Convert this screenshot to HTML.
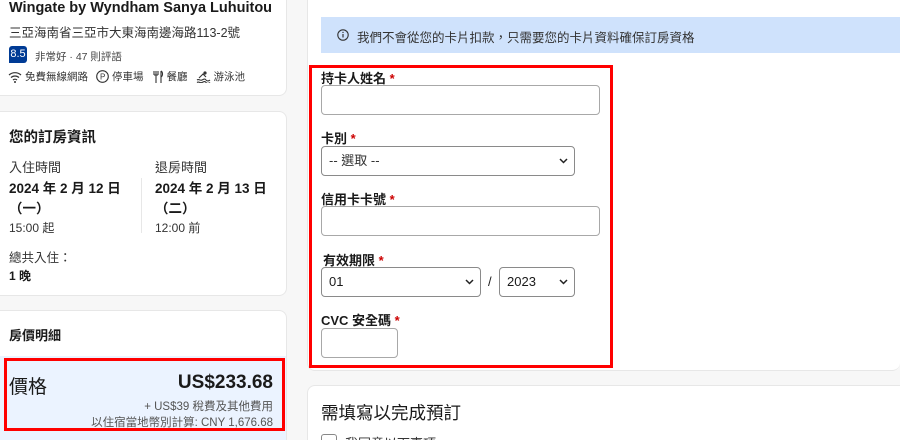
<!DOCTYPE html>
<html style="width:900px;height:440px;overflow:hidden"><head><meta charset="utf-8"><style>
*{box-sizing:border-box;margin:0;padding:0}
body{width:900px;height:440px;overflow:hidden;background:#f7f7f7;font-family:"Liberation Sans","Noto Sans CJK TC",sans-serif;color:#1a1a1a;position:relative}
.a{position:absolute;white-space:nowrap}
.card{position:absolute;background:#fff;border:1px solid #e7e7e7;border-radius:8px}
.b{font-weight:bold}
.in{position:absolute;border:1px solid #a8a8a8;border-radius:4px;background:#fff}
.sel{position:absolute;border:1px solid #8a8a8a;border-radius:4px;background:#fff;font-size:13px;padding:0 7px;line-height:28px}
.sel svg{position:absolute;right:6px;top:11px}
.lab{position:absolute;font-size:13px;font-weight:bold;white-space:nowrap}
.lab i{color:#c00;font-style:normal}
</style></head><body>
<div class="card" style="left:-10px;top:-10px;width:297px;height:106px"></div>
<div class="a b" style="left:9px;top:0px;font-size:14.5px">Wingate by Wyndham Sanya Luhuitou</div>
<div class="a" style="left:9px;top:22px;font-size:12.5px;color:#333">三亞海南省三亞市大東海南邊海路113-2號</div>
<div class="a" style="left:9px;top:46px;width:18px;height:17px;background:#003b95;color:#fff;font-size:11px;text-align:center;line-height:17px;border-radius:3px 3px 3px 0">8.5</div>
<div class="a" style="left:35px;top:49px;font-size:10.5px;color:#444">非常好 · 47 則評語</div>
<div class="a" style="left:8px;top:69px;font-size:10.5px;color:#333;display:flex;align-items:center;gap:3px">
<svg width="14" height="12" viewBox="0 0 14 12"><path d="M1 4a9 9 0 0 1 12 0M3 6.5a6 6 0 0 1 8 0M5 9a3 3 0 0 1 4 0" stroke="#333" fill="none" stroke-width="1.2"/><circle cx="7" cy="11" r="1" fill="#333"/></svg>免費無線網路
<svg style="margin-left:5px" width="13" height="13" viewBox="0 0 13 13"><circle cx="6.5" cy="6.5" r="5.8" stroke="#333" fill="none" stroke-width="1.1"/><text x="4" y="9.5" font-size="8" font-family="Liberation Sans" fill="#333">P</text></svg>停車場
<svg style="margin-left:5px" width="12" height="13" viewBox="0 0 12 13"><path d="M2 1v4M4 1v4M6 1v4M2 5h4M4 5v8M9 1v12M9 1c2 1 2 5 0 6" stroke="#333" fill="none" stroke-width="1.1"/></svg>餐廳
<svg style="margin-left:5px" width="15" height="13" viewBox="0 0 15 13"><circle cx="9" cy="3" r="1.6" fill="#333"/><path d="M3 8l4-4 3 3M1 10c2-1.5 3 1 5 0s3-1.5 4 0 3 1 4 0M1 12.5c2-1.5 3 1 5 0s3-1.5 4 0 3 1 4 0" stroke="#333" fill="none" stroke-width="1.1"/></svg>游泳池</div>

<div class="card" style="left:-10px;top:111px;width:297px;height:185px"></div>
<div class="a b" style="left:9px;top:126px;font-size:14.5px">您的訂房資訊</div>
<div class="a" style="left:9px;top:157px;font-size:13px;color:#333">入住時間</div>
<div class="a" style="left:155px;top:157px;font-size:13px;color:#333">退房時間</div>
<div class="a b" style="left:9px;top:179px;font-size:13.5px;line-height:20px">2024 年 2 月 12 日<br>（一）</div>
<div class="a b" style="left:155px;top:179px;font-size:13.5px;line-height:20px">2024 年 2 月 13 日<br>（二）</div>
<div class="a" style="left:141px;top:178px;width:1px;height:55px;background:#e7e7e7"></div>
<div class="a" style="left:9px;top:219px;font-size:12px;color:#333">15:00 起</div>
<div class="a" style="left:155px;top:219px;font-size:12px;color:#333">12:00 前</div>
<div class="a" style="left:9px;top:247px;font-size:12.5px;color:#333">總共入住：</div>
<div class="a b" style="left:9px;top:267px;font-size:12px">1 晚</div>

<div class="card" style="left:-10px;top:310px;width:297px;height:130px;border-bottom:none;border-radius:8px 8px 0 0"></div>
<div class="a b" style="left:9px;top:325px;font-size:13px">房價明細</div>
<div class="a" style="left:0;top:356px;width:286px;height:84px;background:#ebf3ff"></div>
<div class="a" style="left:4px;top:358px;width:281px;height:73px;border:3px solid #f00"></div>
<div class="a" style="left:9px;top:372px;font-size:19px">價格</div>
<div class="a b" style="right:627px;top:372px;font-size:19px">US$233.68</div>
<div class="a" style="right:627px;top:398px;font-size:11.5px;color:#555">+ US$39 稅費及其他費用</div>
<div class="a" style="right:627px;top:414px;font-size:11.5px;color:#555">以住宿當地幣別計算: CNY 1,676.68</div>

<div class="card" style="left:307px;top:-10px;width:593px;height:381px;border-right:none"></div>
<div class="a" style="left:321px;top:17px;width:579px;height:36px;background:#cfe2fc"></div>
<svg class="a" style="left:337px;top:29px" width="12" height="12" viewBox="0 0 12 12"><circle cx="6" cy="6" r="5.2" stroke="#333" fill="none" stroke-width="1.1"/><path d="M6 5v3.5" stroke="#333" stroke-width="1.2"/><circle cx="6" cy="3.4" r=".7" fill="#333"/></svg>
<div class="a" style="left:357px;top:27px;font-size:12.5px;color:#333">我們不會從您的卡片扣款，只需要您的卡片資料確保訂房資格</div>
<div class="a" style="left:309px;top:65px;width:304px;height:303px;border:3px solid #f00"></div>
<div class="lab" style="left:321px;top:68px">持卡人姓名 <i>*</i></div>
<div class="in" style="left:321px;top:85px;width:279px;height:30px"></div>
<div class="lab" style="left:321px;top:128px">卡別 <i>*</i></div>
<div class="sel" style="left:321px;top:146px;width:254px;height:30px;color:#333">-- 選取 --<svg width="9" height="6" viewBox="0 0 9 6"><path d="M1 1l3.5 3.5L8 1" stroke="#222" fill="none" stroke-width="1.5"/></svg></div>
<div class="lab" style="left:321px;top:189px">信用卡卡號 <i>*</i></div>
<div class="in" style="left:321px;top:206px;width:279px;height:30px"></div>
<div class="lab" style="left:323px;top:250px">有效期限 <i>*</i></div>
<div class="sel" style="left:321px;top:267px;width:160px;height:30px">01<svg width="9" height="6" viewBox="0 0 9 6"><path d="M1 1l3.5 3.5L8 1" stroke="#222" fill="none" stroke-width="1.5"/></svg></div>
<div class="a" style="left:488px;top:274px;font-size:13px">/</div>
<div class="sel" style="left:499px;top:267px;width:76px;height:30px">2023<svg width="9" height="6" viewBox="0 0 9 6"><path d="M1 1l3.5 3.5L8 1" stroke="#222" fill="none" stroke-width="1.5"/></svg></div>
<div class="lab" style="left:321px;top:310px">CVC 安全碼 <i>*</i></div>
<div class="in" style="left:321px;top:328px;width:77px;height:30px"></div>

<div class="card" style="left:307px;top:385px;width:593px;height:55px;border-right:none;border-bottom:none;border-radius:8px 0 0 0"></div>
<div class="a" style="left:321px;top:400px;font-size:17.5px">需填寫以完成預訂</div>
<div class="a" style="left:315px;top:430px;width:200px;height:10px;overflow:hidden">
<div class="a" style="left:6px;top:4px;width:16px;height:16px;border:1px solid #888;border-radius:3px;background:#fff"></div>
<div class="a" style="left:30px;top:3px;font-size:13px;color:#333">我同意以下事項</div>
</div>
</body></html>
